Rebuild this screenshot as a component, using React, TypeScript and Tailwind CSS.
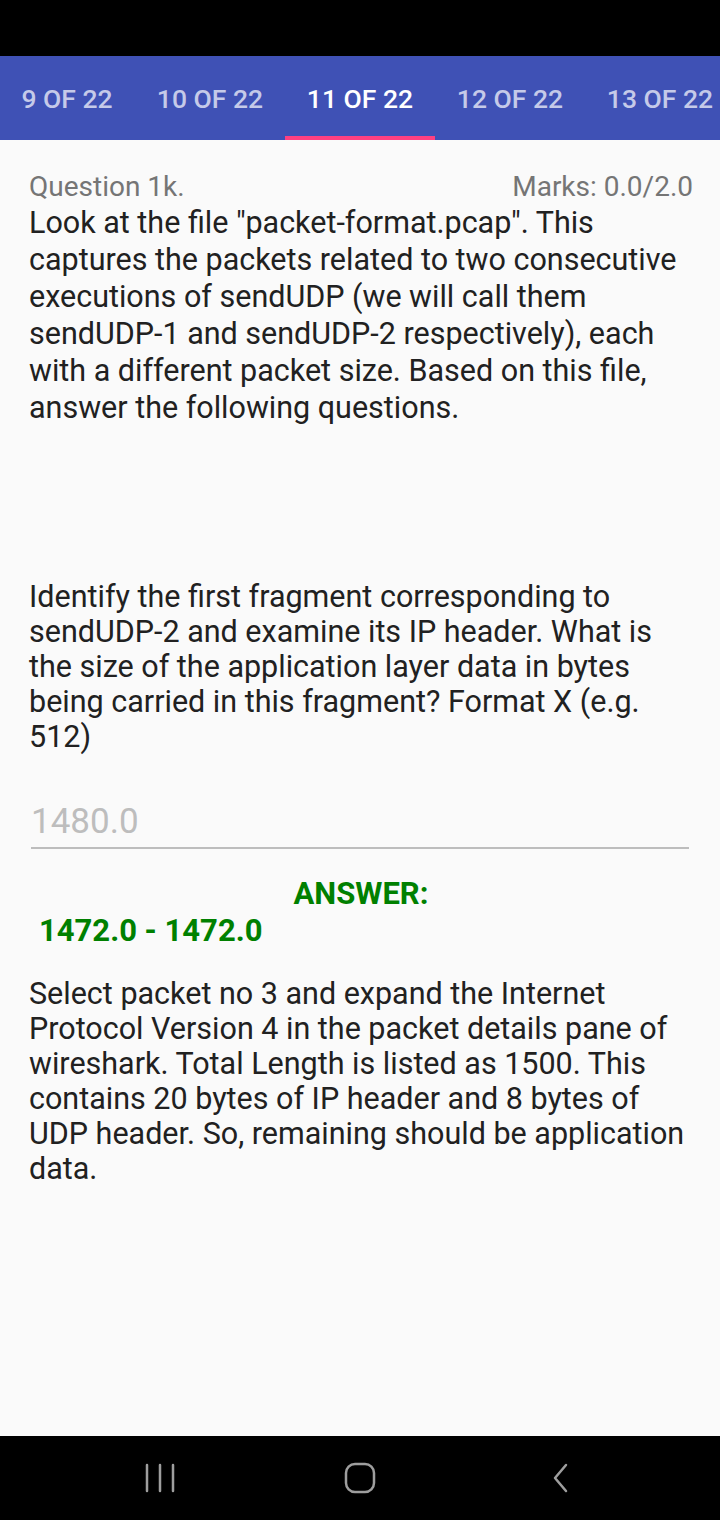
const tabs = ["9 OF 22", "10 OF 22", "11 OF 22", "12 OF 22", "13 OF 22"];

export default function App() {
  return (
    <div
      className="w-[720px] h-[1520px] flex flex-col bg-[#fafafa] overflow-hidden"
      style={{ fontFamily: "Roboto, 'Noto Sans', sans-serif" }}
    >
      {/* status bar */}
      <div className="h-[56px] bg-black shrink-0" />

      {/* tabs */}
      <div className="h-[84px] bg-[#3f51b5] flex shrink-0 -ml-[1px]">
        {tabs.map((t, i) => (
          <div
            key={t}
            className={`${i === 0 ? "w-[136px]" : "w-[150px]"} shrink-0 flex flex-col items-center ${
              i === 2 ? "text-white" : "text-[#c5cae9]"
            }`}
          >
            <div className="flex-1 flex items-center pt-[6px] text-[26.5px] font-medium">
              {t}
            </div>
            <div className={`h-[4px] w-full ${i === 2 ? "bg-[#ff4081]" : ""}`} />
          </div>
        ))}
      </div>

      {/* content */}
      <div className="flex-1 flex flex-col pl-[29px] pr-[27px] pt-[30px]">
        <div className="flex justify-between items-center text-[28px] text-[#757575] leading-[34px]">
          <span>Question 1k.</span>
          <span>Marks: 0.0/2.0</span>
        </div>
        <p className="text-[30.5px] leading-[37px] text-[#212121] pr-[2px]">
          Look at the file "packet-format.pcap". This captures the packets related to two consecutive
          executions of sendUDP (we will call them sendUDP-1 and sendUDP-2 respectively), each with a
          different packet size. Based on this file, answer the following questions.
        </p>

        <p className="mt-[153px] text-[30.5px] leading-[35px] text-[#212121] pr-[2px]">
          Identify the first fragment corresponding to sendUDP-2 and examine its IP header. What is
          the size of the application layer data in bytes being carried in this fragment? Format X
          (e.g. 512)
        </p>

        <div className="mt-[48px] ml-[2px] mr-[4px] border-b-2 border-[#bdbdbd] pb-[5px] text-[35px] leading-[40px] text-[#bdbdbd]">
          1480.0
        </div>

        <div className="mt-[27px] text-center text-[31px] leading-[36px] font-bold text-[#008000]">
          ANSWER:
        </div>
        <div className="pl-[10px] text-[31px] leading-[38px] font-bold text-[#008000]">
          1472.0 - 1472.0
        </div>

        <p className="mt-[26px] text-[30.5px] leading-[35px] text-[#212121]">
          Select packet no 3 and expand the Internet Protocol Version 4 in the packet details pane of
          wireshark. Total Length is listed as 1500. This contains 20 bytes of IP header and 8 bytes of
          UDP header. So, remaining should be application data.
        </p>
      </div>

      {/* nav bar */}
      <div className="h-[84px] bg-black shrink-0 flex items-center justify-center">
        <div className="w-[200px] flex justify-center">
          <svg width="30" height="30" viewBox="0 0 30 30">
            <g stroke="#9e9e9e" strokeWidth="2.5" strokeLinecap="round">
              <line x1="2" y1="2" x2="2" y2="28" />
              <line x1="15" y1="2" x2="15" y2="28" />
              <line x1="28" y1="2" x2="28" y2="28" />
            </g>
          </svg>
        </div>
        <div className="w-[200px] flex justify-center">
          <svg width="32" height="32" viewBox="0 0 32 32">
            <rect x="2" y="2" width="28" height="28" rx="9" fill="none" stroke="#9e9e9e" strokeWidth="2.5" />
          </svg>
        </div>
        <div className="w-[200px] flex justify-center">
          <svg width="30" height="30" viewBox="0 0 30 30">
            <polyline points="21,2 10,15 21,28" fill="none" stroke="#9e9e9e" strokeWidth="2.5" strokeLinecap="round" strokeLinejoin="round" />
          </svg>
        </div>
      </div>
    </div>
  );
}
